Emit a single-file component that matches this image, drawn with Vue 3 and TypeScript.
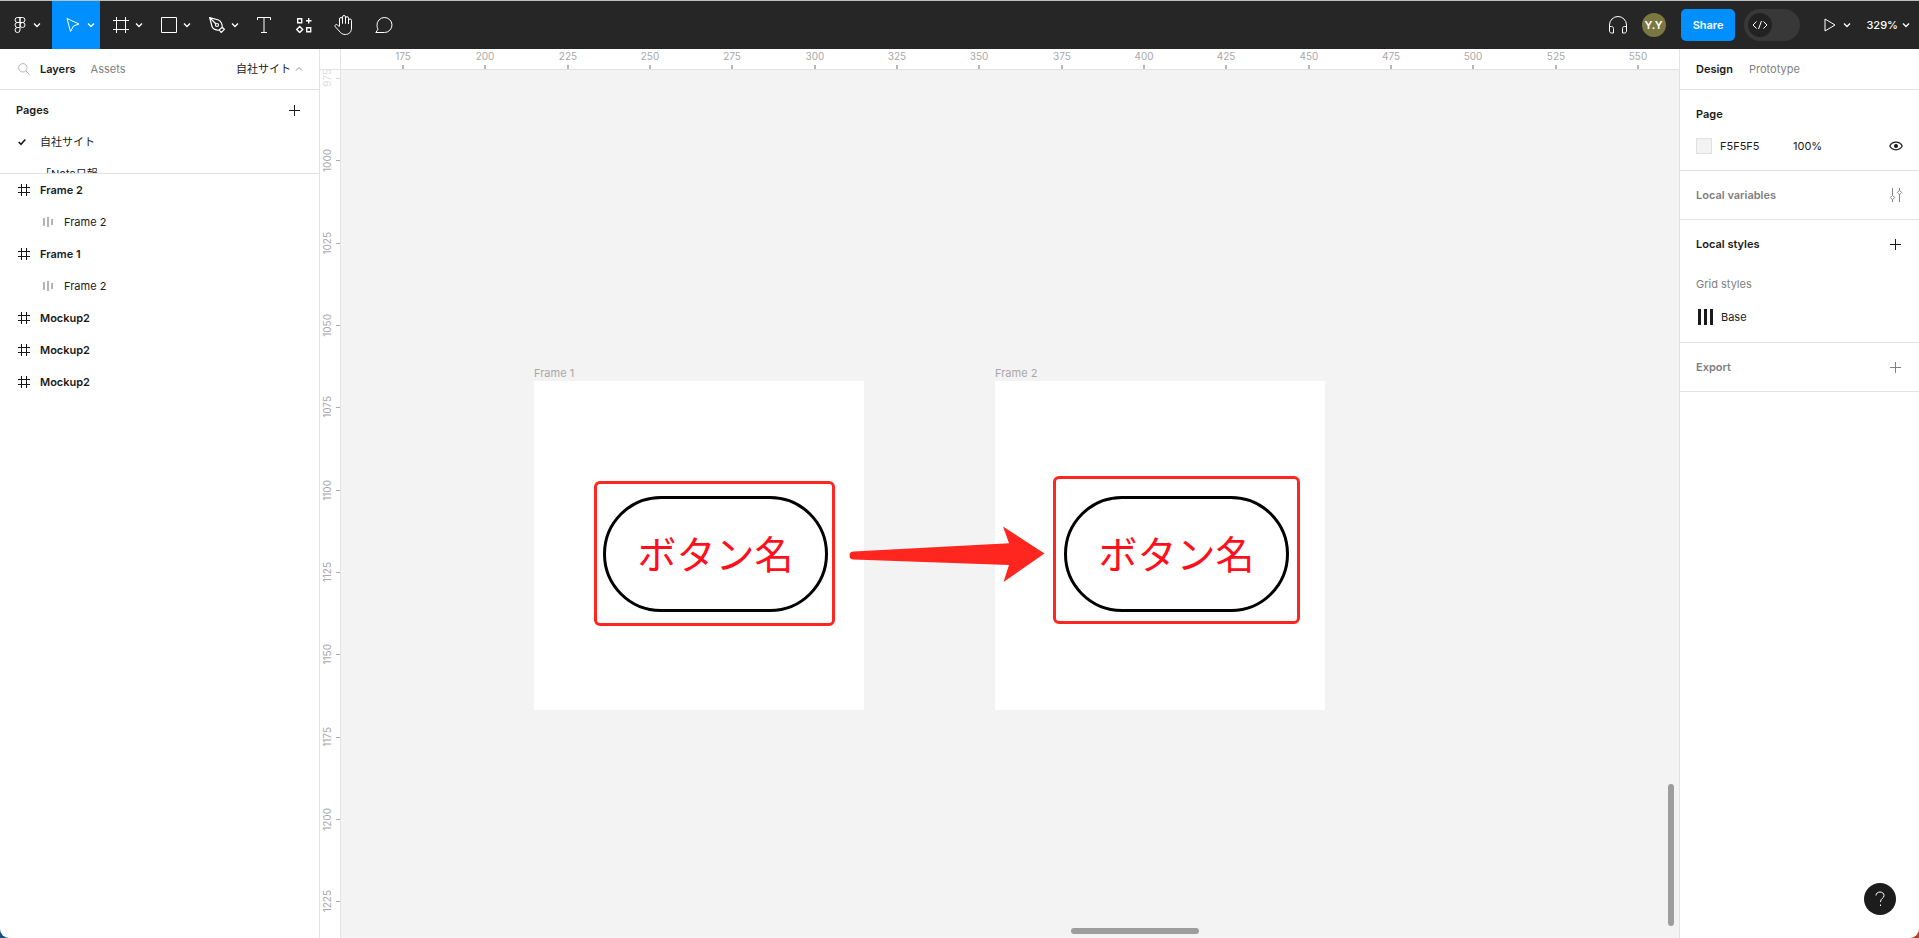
<script setup lang="ts">
interface Layer {
  name: string
  child: boolean
}

interface Artboard {
  name: string
  cls: string
}

const layers: Layer[] = [
  { name: 'Frame 2', child: false },
  { name: 'Frame 2', child: true },
  { name: 'Frame 1', child: false },
  { name: 'Frame 2', child: true },
  { name: 'Mockup2', child: false },
  { name: 'Mockup2', child: false },
  { name: 'Mockup2', child: false },
]

const artboards: Artboard[] = [
  { name: 'Frame 1', cls: 'first' },
  { name: 'Frame 2', cls: 'second' },
]

// Canvas units to pixels at the current zoom level
const scale = 3.293
const step = 25
const ticksX = Array.from({ length: 16 }, (_, i) => ({
  label: 175 + i * step,
  pos: Math.round(62 + i * step * scale),
}))
const ticksY = Array.from({ length: 11 }, (_, i) => ({
  label: 975 + i * step,
  pos: Math.round(8 + i * step * scale),
}))
</script>

<template>
  <div class="app">
    <header class="toolbar">
      <button class="tool menu" aria-label="Main menu">
        <svg width="12" height="18" viewBox="0 0 12 18" class="line">
          <path d="M6 1.500H3.500a2.500 2.500 0 0 0 0 5H6zM6 1.500h2.500a2.500 2.500 0 0 1 0 5H6zM6 6.500H3.500a2.500 2.500 0 0 0 0 5H6zM3.500 11.500H6V14a2.500 2.500 0 1 1-2.500-2.500z" />
          <circle cx="8.500" cy="9" r="2.500" />
        </svg>
        <svg class="chev line" width="8" height="6" viewBox="0 0 8 6"><path d="M1 1.500 4 4.500 7 1.500" /></svg>
      </button>
      <button class="tool active" aria-label="Move">
        <svg width="16" height="18" viewBox="0 0 16 18" class="line">
          <path d="M2 2.500 14 8 8.500 10 5.500 15.500z" />
        </svg>
        <svg class="chev line" width="8" height="6" viewBox="0 0 8 6"><path d="M1 1.500 4 4.500 7 1.500" /></svg>
      </button>
      <button class="tool" aria-label="Frame">
        <svg width="16" height="16" viewBox="0 0 16 16" class="line">
          <path d="M3.500 0v16M12.500 0v16M0 3.500h16M0 12.500h16" />
        </svg>
        <svg class="chev line" width="8" height="6" viewBox="0 0 8 6"><path d="M1 1.500 4 4.500 7 1.500" /></svg>
      </button>
      <button class="tool" aria-label="Rectangle">
        <svg width="16" height="16" viewBox="0 0 16 16" class="line"><path d="M.5.5h15v15H.5z" /></svg>
        <svg class="chev line" width="8" height="6" viewBox="0 0 8 6"><path d="M1 1.500 4 4.500 7 1.500" /></svg>
      </button>
      <button class="tool" aria-label="Pen">
        <svg width="16" height="16" viewBox="0 0 16 16" class="line pen">
          <path d="M.7.7 9.500 3c2.500 1 4 4.500 3.700 7.300L10.200 13C7 13.500 3.700 12 3 9.500zM.7.7 7 7M10.200 13l2 2.500 3.200-3.200-2.200-2" />
          <circle cx="8" cy="8" r="1.500" />
        </svg>
        <svg class="chev line" width="8" height="6" viewBox="0 0 8 6"><path d="M1 1.500 4 4.500 7 1.500" /></svg>
      </button>
      <button class="tool single" aria-label="Text">
        <svg width="14" height="16" viewBox="0 0 14 16" class="line">
          <path d="M.5 3V.5h13V3M7 .5v15M4 15.500h6" />
        </svg>
      </button>
      <button class="tool single" aria-label="Resources">
        <svg width="16" height="16" viewBox="0 0 16 16" class="line bold">
          <path d="M1.700 1.700h4v4h-4zM10.700 10.700h4v4h-4zM12.700 1v5.500M10 3.700h5.500M3.700 9.500 6.700 12.500 3.700 15.500.7 12.500z" />
        </svg>
      </button>
      <button class="tool single" aria-label="Hand tool">
        <svg width="20" height="20" viewBox="0 0 20 20" class="line">
          <path d="M5.500 11V4a1.500 1.500 0 0 1 3 0v4.500M8.500 8.500V2a1.500 1.500 0 0 1 3 0v6.500M11.500 8.500V3.200a1.500 1.500 0 0 1 3 0V9M14.500 9V5.500a1.500 1.500 0 0 1 3 0V13c0 4-2.500 6.500-6.300 6.500-3 0-4.500-1.500-6-3.500L1.200 11.700c-.8-1.500 1-2.900 2.200-1.900l2.100 2.200" />
        </svg>
      </button>
      <button class="tool single" aria-label="Comment">
        <svg width="18" height="18" viewBox="0 0 18 18" class="line">
          <path d="M.8 16.500h8.700A7.500 7.500 0 1 0 2 9.500c0 1.300.4 2.800 1 3.700z" />
        </svg>
      </button>

      <div class="right-tools">
        <button class="icon-btn phones" aria-label="Start conversation">
          <svg width="20" height="18" viewBox="0 0 20 18" class="line">
            <path d="M1.500 13V9a8.500 8.500 0 0 1 17 0v4M1.500 10.500h2c1.200 0 2 .8 2 2V17h-2c-1.200 0-2-.8-2-2zM18.500 10.500h-2c-1.200 0-2 .8-2 2V17h2c1.200 0 2-.8 2-2z" />
          </svg>
        </button>
        <button class="avatar">Y.Y</button>
        <button class="share">Share</button>
        <button class="dev" aria-label="Dev mode">
          <span class="knob">
            <svg width="16" height="10" viewBox="0 0 16 10" class="line">
              <path d="M4.500 1.500 1 5l3.500 3.500M11.500 1.500 15 5l-3.500 3.500M9.500 1l-3 8" />
            </svg>
          </span>
        </button>
        <button class="icon-btn play" aria-label="Present">
          <svg width="12" height="14" viewBox="0 0 12 14" class="line"><path d="M1 1v12l10-6z" /></svg>
          <svg class="chev line" width="8" height="6" viewBox="0 0 8 6"><path d="M1 1.500 4 4.500 7 1.500" /></svg>
        </button>
        <button class="icon-btn zoom">
          329%
          <svg class="chev line" width="8" height="6" viewBox="0 0 8 6"><path d="M1 1.500 4 4.500 7 1.500" /></svg>
        </button>
      </div>
    </header>

    <div class="body">
      <aside class="left">
        <nav class="tabs">
          <button class="search" aria-label="Search">
            <svg width="12" height="12" viewBox="0 0 12 12" class="line"><circle cx="4.800" cy="4.800" r="4.200" /><path d="m8 8 3.500 3.500" /></svg>
          </button>
          <button class="tab on">Layers</button>
          <button class="tab">Assets</button>
          <button class="current">
            自社サイト
            <svg class="line" width="8" height="6" viewBox="0 0 8 6"><path d="M1 4.500 4 1.500 7 4.500" /></svg>
          </button>
        </nav>
        <section class="pages">
          <div class="pages-head">
            <h2>Pages</h2>
            <button aria-label="Add page">
              <svg width="11" height="11" viewBox="0 0 11 11" class="line"><path d="M5.500 0v11M0 5.500h11" /></svg>
            </button>
          </div>
          <div class="page-row">
            <svg width="8" height="8" viewBox="0 0 8 8" class="line check"><path d="M.7 4 3 6.300 7.300 1.500" /></svg>
            <span>自社サイト</span>
          </div>
          <div class="page-row">
            <span>「Note日報</span>
          </div>
        </section>
        <ul class="layers">
          <li v-for="(layer, i) in layers" :key="i" :class="{ child: layer.child }">
            <svg v-if="layer.child" width="12" height="12" viewBox="0 0 12 12">
              <path d="M1 2h2v8H1zM5 1h2v10H5zM9 3h2v6H9z" fill="#b3b3b3" />
            </svg>
            <svg v-else width="12" height="12" viewBox="0 0 12 12" class="line">
              <path d="M3.500 0v12M8.500 0v12M0 3.500h12M0 8.500h12" />
            </svg>
            <span>{{ layer.name }}</span>
          </li>
        </ul>
      </aside>

      <main class="stage">
        <div class="corner"></div>
        <div class="ruler-x">
          <div v-for="t in ticksX" :key="t.label" class="tick" :style="{ left: t.pos + 'px' }">{{ t.label }}</div>
        </div>
        <div class="ruler-y">
          <div v-for="t in ticksY" :key="t.label" class="tick" :class="{ faded: t.label === 975 }" :style="{ top: t.pos + 'px' }">
            <span>{{ t.label }}</span>
          </div>
        </div>
        <div class="canvas">
          <div v-for="a in artboards" :key="a.name" class="artboard" :class="a.cls">
            <span class="label">{{ a.name }}</span>
            <div class="marker"></div>
            <div class="pill">ボタン名</div>
          </div>
          <svg class="arrow" width="196" height="58" viewBox="0 0 196 58">
            <path d="M4.500 25.500 160 17.300 154 .5 195.500 27.500 154.500 56 160 39 4.500 33.500a4 4 0 0 1 0-8z" fill="#ff261f" />
          </svg>
          <div class="thumb-y"></div>
          <div class="thumb-x"></div>
        </div>
      </main>

      <aside class="right">
        <nav class="tabs">
          <button class="tab on">Design</button>
          <button class="tab">Prototype</button>
        </nav>
        <section>
          <div class="row"><h2>Page</h2></div>
          <div class="row">
            <span class="swatch"></span>
            <span class="hex">F5F5F5</span>
            <span>100%</span>
            <button aria-label="Toggle visibility">
              <svg width="14" height="10" viewBox="0 0 14 10">
                <path d="M.8 5C2 2.600 4.200 1.200 7 1.200S12 2.600 13.200 5C12 7.400 9.800 8.800 7 8.800S2 7.400.8 5z" fill="none" stroke="#1a1a1a" stroke-width="1.200" />
                <circle cx="7" cy="5" r="2" fill="#1a1a1a" />
              </svg>
            </button>
          </div>
        </section>
        <section class="muted">
          <div class="row">
            <h2>Local variables</h2>
            <button aria-label="Open variables">
              <svg width="14" height="14" viewBox="0 0 14 14" class="line">
                <path d="M3.500 0v7.500M3.500 11.500V14M10.500 0v2.500M10.500 6.500V14M3.500 7.300l2.200 2.200-2.200 2.200-2.200-2.200zM10.500 2.300l2.200 2.200-2.200 2.200-2.200-2.200z" />
              </svg>
            </button>
          </div>
        </section>
        <section>
          <div class="row">
            <h2>Local styles</h2>
            <button aria-label="Add style">
              <svg width="11" height="11" viewBox="0 0 11 11" class="line"><path d="M5.500 0v11M0 5.500h11" /></svg>
            </button>
          </div>
          <div class="row grid-title">Grid styles</div>
          <div class="row base">
            <svg width="17" height="16" viewBox="0 0 17 16"><path d="M2 0h3v16H2zM8 0h3v16H8zM14 0h3v16h-3z" fill="#1a1a1a" /></svg>
            <span>Base</span>
          </div>
        </section>
        <section class="muted">
          <div class="row">
            <h2>Export</h2>
            <button aria-label="Add export">
              <svg width="11" height="11" viewBox="0 0 11 11" class="line"><path d="M5.500 0v11M0 5.500h11" /></svg>
            </button>
          </div>
        </section>
        <button class="help" aria-label="Help">
          <svg width="10" height="16" viewBox="0 0 10 16" class="line">
            <path d="M1 4.500C1 2.500 2.700 1 5 1s4 1.500 4 3.500C9 7.500 5.500 7 5.500 11M5.500 13.500v1.500" />
          </svg>
        </button>
      </aside>
    </div>
  </div>
</template>

<style>
body {
  background: linear-gradient(90deg, #1b4f80 50%, #b5412a 50%);
}
</style>

<style scoped>
.app {
  display: flex;
  flex-direction: column;
  height: 100vh;
  box-sizing: border-box;
  border-top: 1px solid #bcc0bd;
  border-radius: 0 0 9px 9px;
  overflow: hidden;
  background: #fff;
  color: #1a1a1a;
  font: 11px/16px Inter, "Noto Sans CJK JP", sans-serif;
}

button {
  display: flex;
  align-items: center;
  padding: 0;
  border: 0;
  background: none;
  color: inherit;
  font: inherit;
}

h2 {
  margin: 0;
  font-size: 11px;
  font-weight: 600;
}

svg {
  display: block;
  flex: none;
}

.line {
  fill: none;
  stroke: currentColor;
  stroke-width: 1;
}

.line.bold {
  stroke-width: 1.4;
}

.line.pen {
  stroke-width: 1.2;
}

/* Toolbar */
.toolbar {
  display: flex;
  flex: none;
  height: 48px;
  background: #262626;
  color: #fff;
}

.toolbar .chev {
  stroke-width: 1.3;
}

.tool {
  justify-content: center;
  gap: 6px;
  width: 48px;
  padding-left: 8px;
}

.tool.menu {
  width: 52px;
  gap: 7px;
  padding-left: 2px;
}

.tool.active {
  background: #008fff;
}

.tool.single {
  width: 40px;
  padding-left: 0;
}

.right-tools {
  display: flex;
  align-items: center;
  margin-left: auto;
  padding-right: 9px;
}

.icon-btn {
  height: 32px;
}

.avatar {
  justify-content: center;
  width: 24px;
  height: 24px;
  margin: 0 15px 0 14px;
  border-radius: 50%;
  background: #7a7840;
  font-weight: 600;
}

.share {
  height: 32px;
  padding: 0 12px;
  border-radius: 5px;
  background: #008fff;
  font-weight: 600;
}

.dev {
  width: 56px;
  height: 32px;
  margin: 0 24px 0 9px;
  padding: 0 4px;
  border-radius: 16px;
  background: #383838;
}

.knob {
  display: flex;
  align-items: center;
  justify-content: center;
  width: 24px;
  height: 24px;
  border-radius: 50%;
  background: #222;
}

.play {
  gap: 7px;
  margin-right: 15px;
}

.zoom {
  gap: 4px;
  font-weight: 500;
}

/* Workspace */
.body {
  display: flex;
  flex: 1;
  min-height: 0;
}

.tabs {
  display: flex;
  align-items: center;
  height: 40px;
  border-bottom: 1px solid #e2e2e2;
}

.tab {
  color: #808080;
}

.tab.on {
  color: #1a1a1a;
  font-weight: 600;
}

.left {
  flex: none;
  width: 319px;
  border-right: 1px solid #e2e2e2;
}

.left .tabs {
  padding: 0 16px 0 18px;
}

.search {
  color: #b3b3b3;
}

.left .tab {
  margin-left: 10px;
}

.left .tab + .tab {
  margin-left: 15px;
}

.current {
  gap: 4px;
  margin-left: auto;
}

.current svg {
  color: #909090;
}

.pages {
  height: 83px;
  border-bottom: 1px solid #e2e2e2;
  overflow: hidden;
}

.pages-head {
  display: flex;
  align-items: center;
  justify-content: space-between;
  height: 32px;
  padding: 4px 19px 0 16px;
}

.page-row {
  display: grid;
  grid-template-columns: 22px 1fr;
  align-items: center;
  height: 32px;
  padding-left: 18px;
}

.page-row span {
  grid-column: 2;
}

.check {
  stroke-width: 1.6;
}

.layers {
  margin: 0;
  padding: 0;
  list-style: none;
}

.layers li {
  display: flex;
  align-items: center;
  gap: 10px;
  height: 32px;
  padding-left: 18px;
  font-weight: 600;
}

.layers .child {
  padding-left: 42px;
  font-weight: 400;
}

/* Rulers and canvas */
.stage {
  display: grid;
  grid-template-columns: 21px 1fr;
  grid-template-rows: 21px 1fr;
  flex: 1;
  min-width: 0;
  color: #a8a8a8;
}

.corner,
.ruler-x {
  border-bottom: 1px solid #e2e2e2;
}

.corner,
.ruler-y {
  border-right: 1px solid #e2e2e2;
}

.ruler-x,
.ruler-y {
  position: relative;
  overflow: hidden;
  font-size: 10px;
}

.ruler-x .tick {
  position: absolute;
  top: 0;
  width: 40px;
  height: 20px;
  margin-left: -20px;
  line-height: 15px;
  text-align: center;
}

.ruler-x .tick::after {
  content: "";
  position: absolute;
  bottom: 0;
  left: 19px;
  width: 2px;
  height: 4px;
  background: #b8b8b8;
}

.ruler-y .tick {
  position: absolute;
  left: 0;
  display: flex;
  align-items: center;
  justify-content: center;
  width: 15px;
  height: 40px;
  margin-top: -20px;
}

.ruler-y .tick span {
  line-height: 15px;
  writing-mode: vertical-rl;
  transform: rotate(180deg);
}

.ruler-y .tick::after {
  content: "";
  position: absolute;
  top: 20px;
  left: 16px;
  width: 4px;
  height: 1px;
  background: #a8a8a8;
}

.ruler-y .faded {
  opacity: 0.4;
}

.canvas {
  position: relative;
  overflow: hidden;
  background: #f3f3f3;
}

.artboard {
  position: absolute;
  top: 311px;
  width: 330px;
  height: 329px;
  background: #fff;
}

.first {
  left: 193px;
}

.second {
  left: 654px;
}

.label {
  position: absolute;
  top: -16px;
  left: 0;
}

.marker {
  position: absolute;
  box-sizing: border-box;
  border: 3px solid #ff261f;
  border-radius: 6px;
}

.first .marker {
  top: 100px;
  left: 60px;
  width: 241px;
  height: 145px;
}

.second .marker {
  top: 95px;
  left: 58px;
  width: 247px;
  height: 148px;
}

.pill {
  position: absolute;
  top: 115px;
  left: 69px;
  display: flex;
  align-items: center;
  justify-content: center;
  box-sizing: border-box;
  width: 225px;
  height: 116px;
  padding-bottom: 4px;
  border: 3px solid #000;
  border-radius: 58px;
  color: #ff0f1b;
  font: 39px/40px "Noto Sans CJK JP", sans-serif;
}

.arrow {
  position: absolute;
  top: 456px;
  left: 508px;
}

.thumb-y,
.thumb-x {
  position: absolute;
  border-radius: 3px;
  background: #9d9d9d;
}

.thumb-y {
  right: 5px;
  bottom: 12px;
  width: 6px;
  height: 142px;
}

.thumb-x {
  bottom: 4px;
  left: 730px;
  width: 128px;
  height: 6px;
}

/* Inspector */
.right {
  display: flex;
  flex: none;
  flex-direction: column;
  width: 239px;
  border-left: 1px solid #e2e2e2;
}

.right .tabs {
  flex: none;
  gap: 16px;
  padding-left: 16px;
}

.right section {
  padding: 8px 17px 8px 16px;
  border-bottom: 1px solid #e2e2e2;
}

.row {
  display: flex;
  align-items: center;
  height: 32px;
}

.row button {
  justify-content: center;
  width: 13px;
  margin-left: auto;
}

.muted {
  color: #808080;
}

.swatch {
  box-sizing: border-box;
  width: 16px;
  height: 16px;
  margin-right: 8px;
  border: 1px solid #e2e2e2;
  background: #f3f3f3;
}

.hex {
  width: 73px;
}

.grid-title {
  margin-top: 8px;
  color: #808080;
}

.base {
  gap: 8px;
  height: 34px;
}

.help {
  justify-content: center;
  width: 32px;
  height: 32px;
  margin: auto 23px 23px auto;
  border-radius: 50%;
  background: #1c1c1c;
  color: #fff;
}
</style>
